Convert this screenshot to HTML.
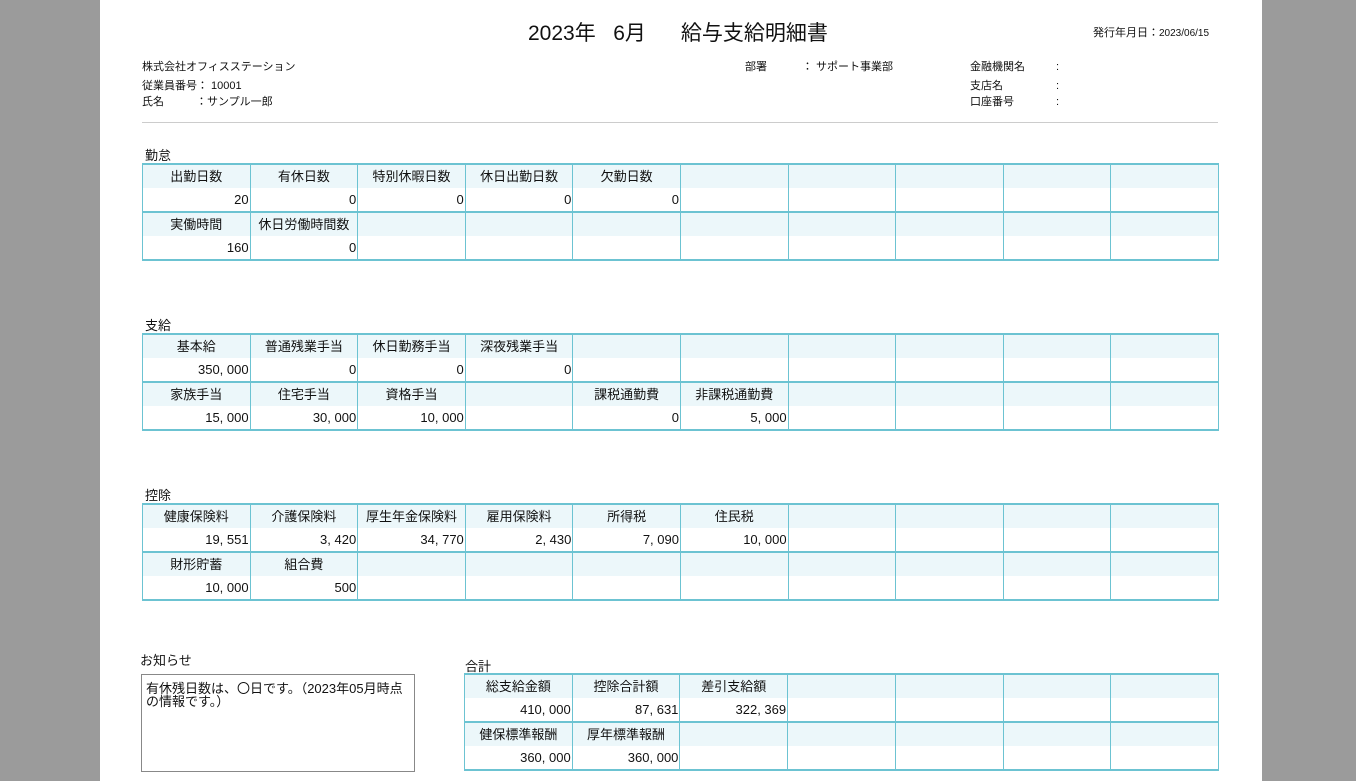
<!DOCTYPE html>
<html><head><meta charset="utf-8"><style>
body{margin:0;width:1356px;height:781px;background:#9b9b9b;overflow:hidden;font-family:"Liberation Sans","Noto Sans CJK JP",sans-serif;color:#111}
.page{position:absolute;left:100px;top:0;width:1162px;height:781px;background:#fff}
.a{position:absolute;white-space:nowrap}
.s{font-size:11px}
table{position:absolute;border-collapse:collapse;table-layout:fixed;font-size:13px}
td{border-left:1px solid #6cc3d2;border-right:1px solid #6cc3d2;padding:0 1px;height:23px;line-height:23px;overflow:hidden;white-space:nowrap}
tr.h td{background:#ecf7fa;text-align:center;border-top:2px solid #6cc3d2}
tr.v td{text-align:right;background:#fff}
tr.v.last td{border-bottom:2px solid #6cc3d2}
</style></head><body>
<div class="page"></div>
<div class="a" style="left:528px;top:17px;font-size:21px;color:#111">2023年&nbsp;&nbsp;&nbsp;6月&nbsp;&nbsp;&nbsp;&nbsp;&nbsp;&nbsp;給与支給明細書</div>
<div class="a s" style="left:1093px;top:24px">発行年月日：<span style="font-size:10px">2023/06/15</span></div>
<div class="a s" style="left:142px;top:58px">株式会社オフィスステーション</div>
<div class="a s" style="left:142px;top:77px">従業員番号：&nbsp;10001</div>
<div class="a s" style="left:142px;top:93px">氏名</div>
<div class="a s" style="left:196px;top:93px">：サンプル一郎</div>
<div class="a s" style="left:745px;top:58px">部署</div>
<div class="a s" style="left:802px;top:58px">：&nbsp;サポート事業部</div>
<div class="a s" style="left:970px;top:58px">金融機関名</div>
<div class="a s" style="left:970px;top:77px">支店名</div>
<div class="a s" style="left:970px;top:93px">口座番号</div>
<div class="a s" style="left:1056px;top:61px">:</div>
<div class="a s" style="left:1056px;top:80px">:</div>
<div class="a s" style="left:1056px;top:96px">:</div>
<div class="a" style="left:142px;top:122px;width:1076px;height:1px;background:#ccc"></div>

<div class="a" style="left:145px;top:145px;font-size:13px">勤怠</div>
<table style="left:142px;top:163px;width:1077px">
<tr class="h"><td>出勤日数</td><td>有休日数</td><td>特別休暇日数</td><td>休日出勤日数</td><td>欠勤日数</td><td></td><td></td><td></td><td></td><td></td></tr>
<tr class="v"><td>20</td><td>0</td><td>0</td><td>0</td><td>0</td><td></td><td></td><td></td><td></td><td></td></tr>
<tr class="h"><td>実働時間</td><td>休日労働時間数</td><td></td><td></td><td></td><td></td><td></td><td></td><td></td><td></td></tr>
<tr class="v last"><td>160</td><td>0</td><td></td><td></td><td></td><td></td><td></td><td></td><td></td><td></td></tr>
</table>

<div class="a" style="left:145px;top:315px;font-size:13px">支給</div>
<table style="left:142px;top:333px;width:1077px">
<tr class="h"><td>基本給</td><td>普通残業手当</td><td>休日勤務手当</td><td>深夜残業手当</td><td></td><td></td><td></td><td></td><td></td><td></td></tr>
<tr class="v"><td>350, 000</td><td>0</td><td>0</td><td>0</td><td></td><td></td><td></td><td></td><td></td><td></td></tr>
<tr class="h"><td>家族手当</td><td>住宅手当</td><td>資格手当</td><td></td><td>課税通勤費</td><td>非課税通勤費</td><td></td><td></td><td></td><td></td></tr>
<tr class="v last"><td>15, 000</td><td>30, 000</td><td>10, 000</td><td></td><td>0</td><td>5, 000</td><td></td><td></td><td></td><td></td></tr>
</table>

<div class="a" style="left:145px;top:485px;font-size:13px">控除</div>
<table style="left:142px;top:503px;width:1077px">
<tr class="h"><td>健康保険料</td><td>介護保険料</td><td>厚生年金保険料</td><td>雇用保険料</td><td>所得税</td><td>住民税</td><td></td><td></td><td></td><td></td></tr>
<tr class="v"><td>19, 551</td><td>3, 420</td><td>34, 770</td><td>2, 430</td><td>7, 090</td><td>10, 000</td><td></td><td></td><td></td><td></td></tr>
<tr class="h"><td>財形貯蓄</td><td>組合費</td><td></td><td></td><td></td><td></td><td></td><td></td><td></td><td></td></tr>
<tr class="v last"><td>10, 000</td><td>500</td><td></td><td></td><td></td><td></td><td></td><td></td><td></td><td></td></tr>
</table>

<div class="a" style="left:140px;top:650px;font-size:13px">お知らせ</div>
<div class="a" style="left:141px;top:674px;width:274px;height:98px;border:1px solid #888;font-size:13px;line-height:13px;padding:7px 4px;box-sizing:border-box;white-space:normal">有休残日数は、〇日です。（2023年05月時点の情報です。）</div>

<div class="a" style="left:465px;top:656px;font-size:13px">合計</div>
<table style="left:464px;top:673px;width:755px">
<tr class="h"><td>総支給金額</td><td>控除合計額</td><td>差引支給額</td><td></td><td></td><td></td><td></td></tr>
<tr class="v"><td>410, 000</td><td>87, 631</td><td>322, 369</td><td></td><td></td><td></td><td></td></tr>
<tr class="h"><td>健保標準報酬</td><td>厚年標準報酬</td><td></td><td></td><td></td><td></td><td></td></tr>
<tr class="v last"><td>360, 000</td><td>360, 000</td><td></td><td></td><td></td><td></td><td></td></tr>
</table>
</body></html>
